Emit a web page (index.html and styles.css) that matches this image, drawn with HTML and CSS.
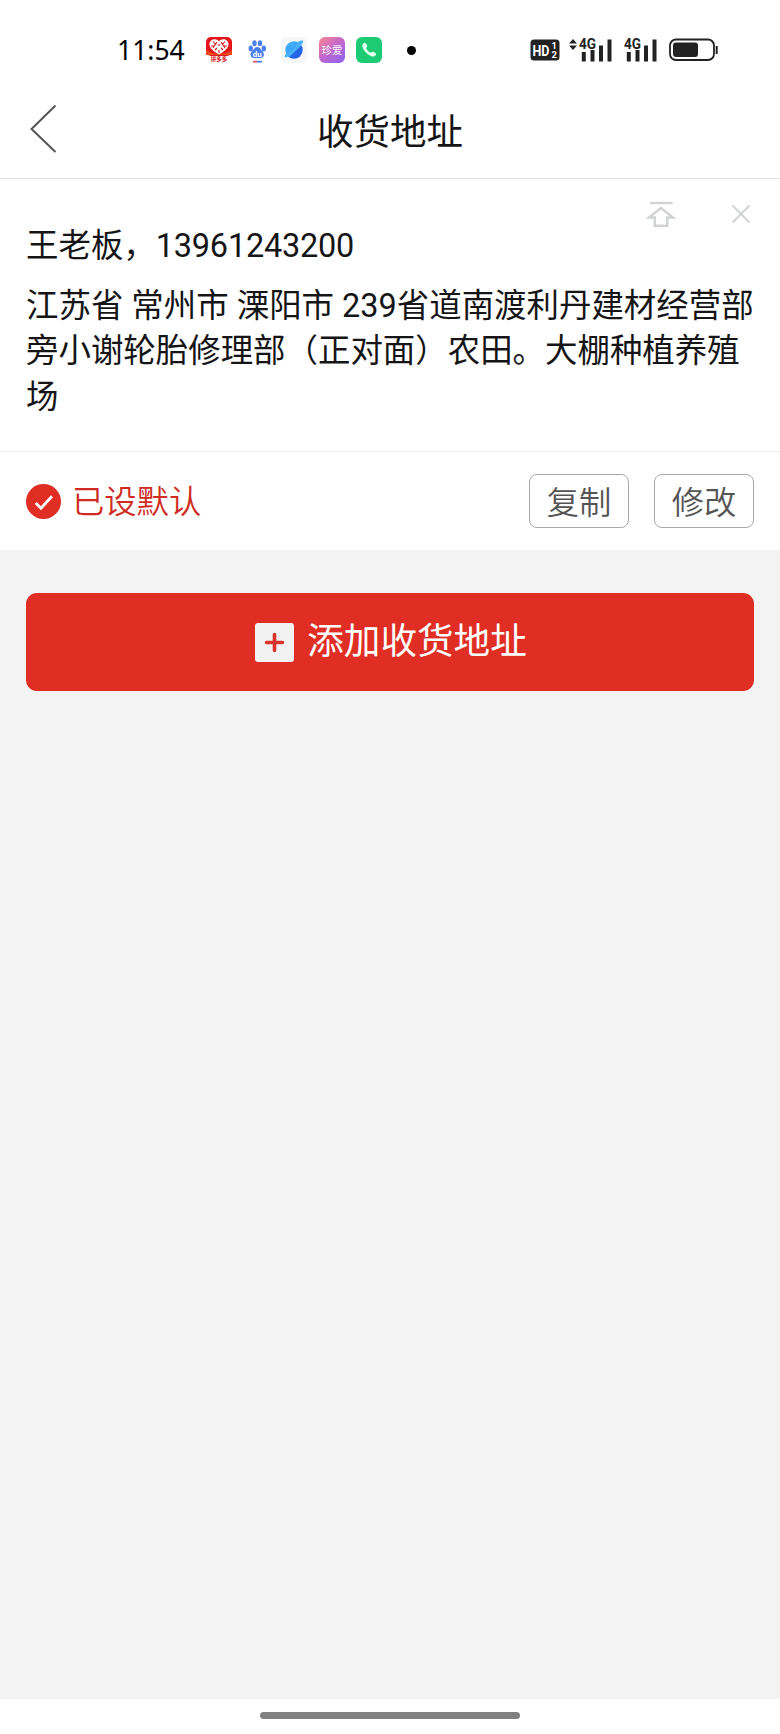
FILE: index.html
```html
<!DOCTYPE html>
<html lang="zh-CN">
<head>
    <meta charset="UTF-8">
    <meta name="viewport" content="width=device-width, initial-scale=1.0">
    <title>收货地址</title>
    <link rel="stylesheet" href="styles.css">
</head>
<body>

<div class="status-bar">
    <div class="status-left">
        <span class="clock">11:54</span>
        <div class="app-icons">
            <svg class="app-icon" viewBox="0 0 26 26">
                <rect x="0" y="0" width="26" height="19" rx="5" fill="#e3151b"/>
                <path d="M0 13q6 4 13 4t13-4v5H0z" fill="#ee4a1c"/>
                <path d="M13 17.500C7 14 3.500 11 3.500 7c0-5 7-6.500 9.500-2.500 2.500-4 9.500-2.500 9.500 2.500 0 4-3.500 7-9.500 10.500z" fill="#fff"/>
                <path d="M7 4.500l2.500 3M11 5l-4 6M15 5l4 6M19 4.500l-2.500 3M5 9h3M18 9h3M9 13l2-2M17 13l-2-2M11.500 8h3M13 13v3" stroke="#e3151b" stroke-width="1.1"/>
                <text x="13" y="23.500" class="mall-label">拼多多</text>
            </svg>
            <svg class="app-icon" viewBox="0 0 26 26">
                <g fill="#4a80ee">
                    <ellipse cx="6.800" cy="11.500" rx="2.200" ry="2.900"/>
                    <ellipse cx="10.500" cy="6.300" rx="2.200" ry="3"/>
                    <ellipse cx="16" cy="6.300" rx="2.200" ry="3"/>
                    <ellipse cx="19.800" cy="11.500" rx="2.200" ry="2.900"/>
                    <path d="M13.200 10c2.800 0 3.500 2.800 5.400 4.500 2.300 2 1.700 6.500-2 6.500H9.800c-3.700 0-4.300-4.500-2-6.500C9.700 12.800 10.400 10 13.200 10z"/>
                </g>
                <text x="13.200" y="19.600" class="paw-label">du</text>
                <path d="M9 24.700h4" stroke="#e25765" stroke-width="1.800"/>
                <path d="M13 24.700h5" stroke="#4a80ee" stroke-width="1.800"/>
            </svg>
            <svg class="app-icon" viewBox="0 0 26 26">
                <defs>
                    <linearGradient id="planet" x1="0" y1="0" x2="1" y2="1">
                        <stop offset="0" stop-color="#48b6fb"/>
                        <stop offset="0.55" stop-color="#37a0f8"/>
                        <stop offset="0.6" stop-color="#2465e8"/>
                        <stop offset="1" stop-color="#2465e8"/>
                    </linearGradient>
                </defs>
                <rect width="26" height="26" rx="6" fill="#f5f6f6"/>
                <circle cx="13" cy="13" r="8.700" fill="url(#planet)"/>
                <path d="M17 5c3-1.500 5-1.800 5.200-.8.300 2-5 7.500-10 11.500-3.700 3-7.500 5.400-8.300 4.600-.6-.7.300-2.500 1.600-4.300 4-.5 10.500-6 11.500-11z" fill="#4ab2f8"/>
            </svg>
            <svg class="app-icon" viewBox="0 0 26 26">
                <defs>
                    <linearGradient id="love" x1="0" y1="0" x2="0.8" y2="1">
                        <stop offset="0" stop-color="#fa8890"/>
                        <stop offset="0.5" stop-color="#c467ca"/>
                        <stop offset="1" stop-color="#9564ea"/>
                    </linearGradient>
                </defs>
                <rect width="26" height="26" rx="6" fill="url(#love)"/>
                <text x="13" y="17" class="love-label">珍爱</text>
            </svg>
            <svg class="app-icon" viewBox="0 0 26 26">
                <rect width="26" height="26" rx="6" fill="#1dcb74"/>
                <path d="M7.300 6.500c1.400-1.200 2.500-.6 3.300 1l.5 1c.5 1.100-.6 1.800-.9 2.600.5 2 2.500 4 4.500 4.700.9-.3 1.600-1.500 2.700-1l1.300.7c1.500.8 1.800 2 .7 3.100-1.700 1.700-4.500.8-7.200-1.200-2.800-2.100-5-5-5.700-7.500-.3-1.300-.1-2.500.8-3.400z" fill="#e3fff0"/>
            </svg>
        </div>
        <span class="more-dot"></span>
    </div>
    <div class="status-right">
        <svg class="hd-icon" width="30" height="22" viewBox="0 0 30 22">
            <rect x="0.500" y="0.500" width="29" height="21" rx="3.500" fill="#222"/>
            <text x="2.500" y="16.500" class="hd-label" textLength="17" lengthAdjust="spacingAndGlyphs">HD</text>
            <text x="21.500" y="10" class="hd-num">1</text>
            <text x="21.500" y="18.500" class="hd-num">2</text>
        </svg>
        <svg class="signal-one" width="44" height="36" viewBox="0 -6 44 36">
            <path d="M0 5.500L4 1l4 4.500zM0 7.500h8L4 12z" fill="#222"/>
            <text x="10" y="10.800" class="net-label" textLength="17" lengthAdjust="spacingAndGlyphs">4G</text>
            <path d="M14.800 14v9.500M23.500 12v11.500M32 7.500v16M40.500 1.500v22" class="signal-bars"/>
        </svg>
        <svg class="signal-two" width="34" height="36" viewBox="10 -6 34 36">
            <text x="10" y="10.800" class="net-label" textLength="17" lengthAdjust="spacingAndGlyphs">4G</text>
            <path d="M14.800 14v9.500M23.500 12v11.500M32 7.500v16M40.500 1.500v22" class="signal-bars"/>
        </svg>
        <svg class="battery" width="50" height="24" viewBox="0 0 50 24">
            <rect x="1" y="1.500" width="44" height="20.500" rx="6" fill="none" stroke="#222" stroke-width="1.800"/>
            <rect x="4" y="4.500" width="25" height="14.500" rx="3" fill="#222"/>
            <path d="M47.700 8v8" stroke="#222" stroke-width="2"/>
        </svg>
    </div>
</div>

<div class="header">
    <svg class="back" width="28" height="50" viewBox="0 0 28 50">
        <path d="M26.500 1.500L2.500 25l24 23" fill="none" stroke="#555" stroke-width="2"/>
    </svg>
    <h1>收货地址</h1>
</div>

<div class="address-card">
    <div class="card-tools">
        <svg width="30" height="27" viewBox="0 0 30 27">
            <path d="M4 2h22.500" class="tool-line"/>
            <path d="M15 7L3 16.500h5.800v8.300h12.400v-8.300H27z" class="tool-line"/>
        </svg>
        <svg width="20" height="20" viewBox="0 0 20 20">
            <path d="M1.500 1.500l17 17M18.500 1.500l-17 17" class="tool-cross"/>
        </svg>
    </div>
    <div class="contact">王老板，<span class="phone">13961243200</span></div>
    <div class="address">江苏省 常州市 溧阳市 239省道南渡利丹建材经营部旁小谢轮胎修理部（正对面）农田。大棚种植养殖场</div>
    <div class="card-actions">
        <div class="default-flag">
            <svg width="35" height="35" viewBox="0 0 35 35">
                <circle cx="17.500" cy="17.500" r="17.500" fill="#e02e24"/>
                <path d="M9.700 19l5.300 5.300L26 12.200" fill="none" stroke="#fff" stroke-width="2.800"/>
            </svg>
            <span>已设默认</span>
        </div>
        <button class="small-button">复制</button>
        <button class="small-button">修改</button>
    </div>
</div>

<button class="add-button">
    <svg width="39" height="39" viewBox="0 0 39 39">
        <rect width="39" height="39" rx="3" fill="#f2f2f2"/>
        <path d="M11.500 19.500h16M19.500 11.500v16" stroke="#d9342b" stroke-width="3.600" stroke-linecap="round"/>
    </svg>
    <span>添加收货地址</span>
</button>

<div class="gesture-bar">
    <div class="gesture-handle"></div>
</div>

</body>
</html>
```
FILE: styles.css
```css
* {
    box-sizing: border-box;
}

body {
    font-family: Roboto, "Noto Sans CJK SC", sans-serif;
    background-color: #f3f3f3;
    color: #151516;
    display: flex;
    flex-direction: column;
    height: 1734px;
    margin: 0;
}

/* Status bar */
.status-bar {
    display: flex;
    justify-content: space-between;
    align-items: center;
    height: 90px;
    padding: 10px 61px 0 117px;
    background-color: #ffffff;
}

.status-left,
.status-right,
.app-icons {
    display: flex;
    align-items: center;
}

.clock {
    width: 89px;
    font-family: "Noto Sans", sans-serif;
    font-size: 26.5px;
    line-height: 32px;
    color: #000000;
}

.app-icons {
    gap: 11.6px;
}

.app-icon {
    width: 26px;
    height: 26px;
}

.mall-label,
.paw-label,
.love-label {
    text-anchor: middle;
}

.mall-label {
    font-size: 5.5px;
    font-weight: bold;
    fill: #d7181e;
}

.paw-label {
    font-size: 8px;
    font-weight: bold;
    fill: #ffffff;
}

.love-label {
    font-size: 10.5px;
    fill: #ffffff;
}

.more-dot {
    width: 9px;
    height: 9px;
    margin-left: 25px;
    border-radius: 50%;
    background-color: #000000;
}

.hd-label {
    font-size: 15px;
    font-weight: bold;
    fill: #ffffff;
}

.hd-num {
    font-size: 9.5px;
    font-weight: bold;
    fill: #ffffff;
}

.net-label {
    font-size: 14px;
    font-weight: bold;
    fill: #222222;
}

.signal-bars {
    stroke: #222222;
    stroke-width: 4;
    stroke-linecap: butt;
}

.signal-one {
    margin-left: 9px;
}

.signal-two {
    margin-left: 11px;
}

.battery {
    margin-left: 11px;
}

/* Page header */
.header {
    display: grid;
    grid-template-columns: 60px 1fr 60px;
    align-items: center;
    height: 89px;
    padding-bottom: 2px;
    border-bottom: 1px solid #e2e2e2;
    background-color: #ffffff;
}

.back {
    margin: 0 0 9px 29px;
}

.header h1 {
    margin: 0;
    font-size: 36.5px;
    font-weight: normal;
    line-height: 50px;
    text-align: center;
}

/* Address card */
.address-card {
    height: 371px;
    background-color: #ffffff;
}

.card-tools {
    display: flex;
    justify-content: flex-end;
    align-items: center;
    gap: 55px;
    height: 45px;
    padding: 25px 29px 0 0;
}

.card-tools svg {
    flex: none;
}

.tool-line,
.tool-cross {
    fill: none;
    stroke: #d2d4d3;
    stroke-width: 2.5;
}

.tool-cross {
    stroke-width: 2;
}

.contact,
.address {
    padding: 0 24px 0 26px;
    font-size: 32.45px;
    line-height: 45.4px;
}

.phone {
    letter-spacing: -0.2px;
}

.address {
    height: 168px;
    margin-top: 14.6px;
    border-bottom: 1px solid #eeeeee;
}

.card-actions {
    display: flex;
    align-items: center;
    gap: 25px;
    height: 98px;
    padding: 0 26px;
}

.default-flag {
    display: flex;
    align-items: center;
    gap: 11px;
    margin-right: auto;
    font-size: 32.3px;
    font-weight: 350;
    line-height: 46px;
    color: #cf2b22;
}

.default-flag span {
    padding-top: 2px;
}

.small-button {
    width: 100px;
    height: 54px;
    padding: 3px 0 0;
    border: 1px solid #a8a8a8;
    border-radius: 8px;
    background-color: #ffffff;
    color: #555555;
    font-family: inherit;
    font-size: 32.3px;
    font-weight: 350;
    line-height: 46px;
}

.add-button {
    display: flex;
    justify-content: center;
    align-items: center;
    gap: 13px;
    height: 98px;
    margin: 43px 26px 0;
    padding: 0 0 0 2px;
    border: none;
    border-radius: 11px;
    background-color: #e02e24;
    color: #ffffff;
    font-family: inherit;
    font-size: 36.6px;
    line-height: 50px;
}

/* Bottom gesture area */
.gesture-bar {
    display: flex;
    justify-content: center;
    align-items: center;
    height: 35px;
    margin-top: auto;
    padding-bottom: 2px;
    background-color: #ffffff;
}

.gesture-handle {
    width: 260px;
    height: 7px;
    border-radius: 4px;
    background-color: #808080;
}
```
